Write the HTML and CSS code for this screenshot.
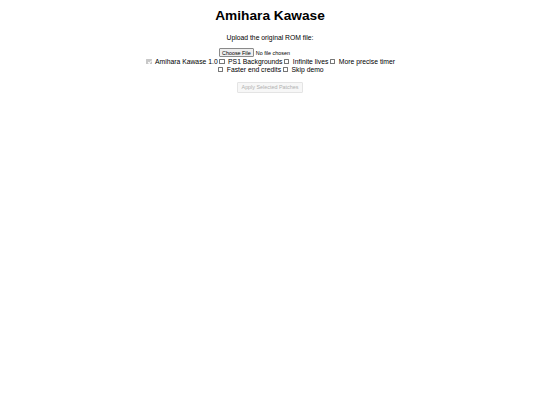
FILE: index.html
```html
<!DOCTYPE html>
<html>
<head>
<meta charset="utf-8">
<link rel="stylesheet" href="styles.css">
</head>
<body>
<div class="page">
  <h1 class="title">Amihara Kawase</h1>
  <p class="upload-label">Upload the original ROM file:</p>
  <div class="file-row">
    <input type="file" class="file-input">
  </div>
  <div class="options">
    <span class="opt"><input type="checkbox" class="cb" checked disabled><label> Amihara Kawase 1.0</label></span><span class="opt"><input type="checkbox" class="cb"><label> PS1 Backgrounds</label></span><span class="opt"><input type="checkbox" class="cb"><label> Infinite lives</label></span><span class="opt"><input type="checkbox" class="cb"><label> More precise timer</label></span><br><span class="opt"><input type="checkbox" class="cb"><label> Faster end credits</label></span><span class="opt"><input type="checkbox" class="cb"><label> Skip demo</label></span>
  </div>
  <div class="apply-row">
    <button class="apply" disabled>Apply Selected Patches</button>
  </div>
</div>
</body>
</html>
```
FILE: styles.css
```css
html, body {
  margin: 0;
  padding: 0;
  background: #fff;
}
body {
  font-family: "Liberation Sans", Arial, sans-serif;
  font-size: 6.8px;
  color: #000;
}
.page {
  text-align: center;
  padding-top: 7px;
}
.title {
  font-size: 13.7px;
  font-weight: bold;
  margin: 0 0 8px 0;
  line-height: 18px;
}
.upload-label {
  margin: 0 0 5.5px 0;
  line-height: 9px;
}
.file-row {
  line-height: 9px;
}
.file-input {
  font-family: "Liberation Sans", Arial, sans-serif;
  font-size: 5.4px;
  color: #000;
}
.file-input::file-selector-button {
  font-family: "Liberation Sans", Arial, sans-serif;
  font-size: 5.4px;
  padding: 0.5px 2px;
  margin: 0 2px 0 0;
  border: 1px solid #8a8a8a;
  border-radius: 1px;
  background: #efefef;
  color: #000;
}
.options {
  line-height: 8px;
  padding-top: 0.5px;
}
.cb {
  appearance: none;
  -webkit-appearance: none;
  box-sizing: border-box;
  width: 5.5px;
  height: 5.5px;
  margin: 0 1.5px 0 1.5px;
  border: 0.6px solid #767676;
  border-radius: 0.5px;
  background: #fff;
  vertical-align: -0.5px;
  position: relative;
}
.cb:checked:disabled {
  background: #c8c8c8;
  border-color: #c8c8c8;
}
.cb:checked:disabled::after {
  content: "";
  position: absolute;
  left: 1.3px;
  top: 0.3px;
  width: 1.4px;
  height: 2.6px;
  border: solid #fff;
  border-width: 0 0.7px 0.7px 0;
  transform: rotate(45deg);
}
.apply-row {
  margin-top: 8px;
}
.apply {
  font-family: "Liberation Sans", Arial, sans-serif;
  font-size: 5.4px;
  padding: 1.5px 3.5px;
  border: 1px solid #e4e4e4;
  border-radius: 1px;
  background: #f7f7f7;
  color: #b0b0b0;
}
```
